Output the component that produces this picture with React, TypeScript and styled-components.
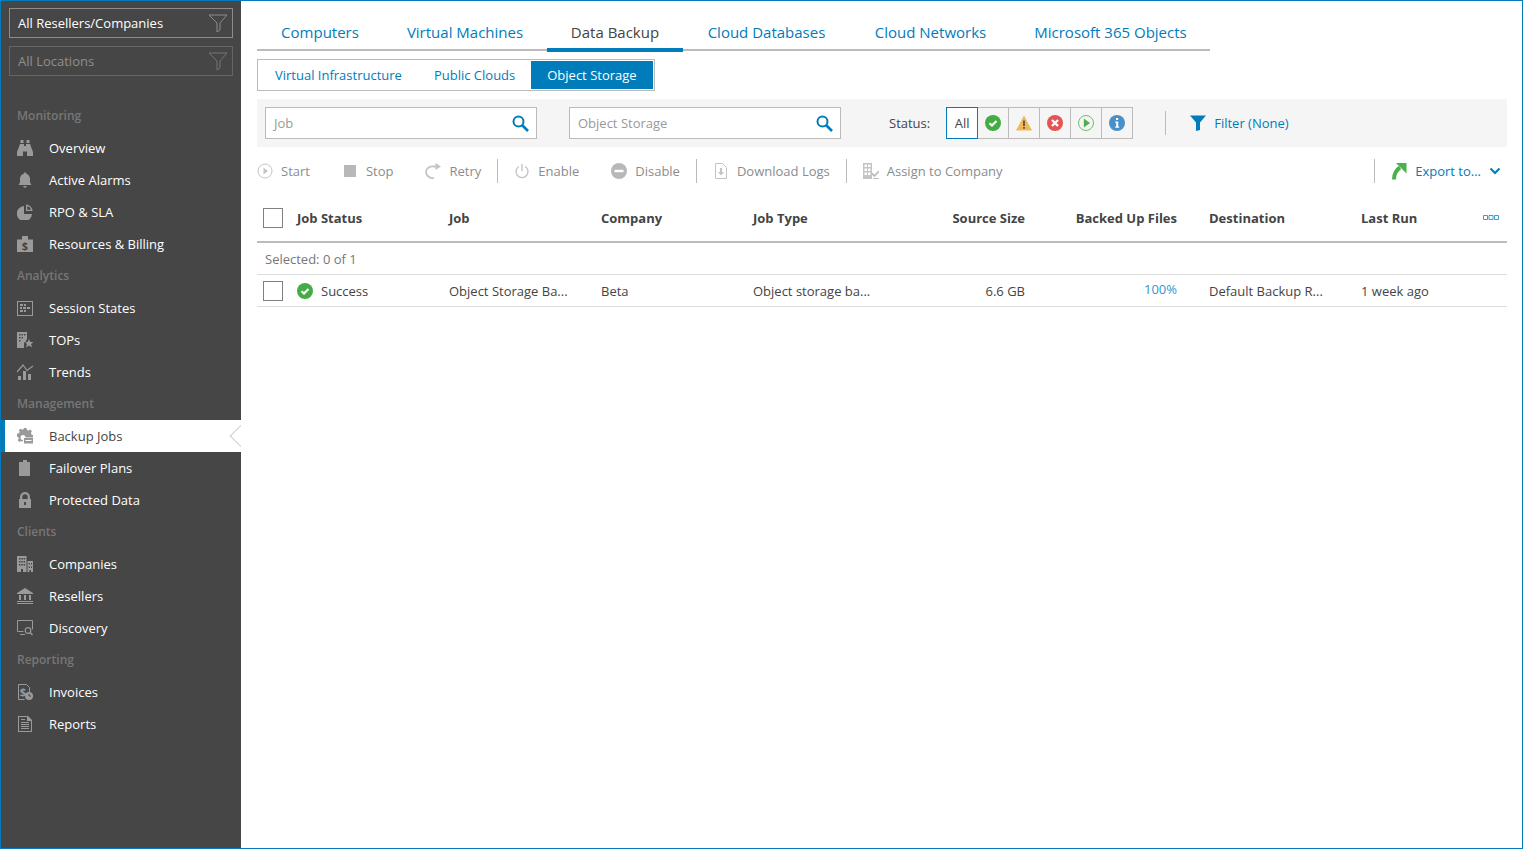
import { ReactNode } from "react";
import styled, { createGlobalStyle } from "styled-components";

const BLUE = "#007cbb";

const GlobalStyle = createGlobalStyle`
    html, body {
        margin: 0;
        padding: 0;
        height: 100%;
        overflow: hidden;
        background: #fff;
    }
    #root {
        height: 100%;
    }
    * {
        box-sizing: border-box;
    }
`;

const Frame = styled.div`
    display: flex;
    height: 100vh;
    border: 1px solid ${BLUE};
    font-family: "Open Sans", "Liberation Sans", sans-serif;
    font-size: 13px;
    color: #444;
`;

const Sidebar = styled.aside`
    flex: 0 0 240px;
    background: #464646;
    padding-top: 7px;
`;

const ScopeGroup = styled.div`
    display: flex;
    flex-direction: column;
    gap: 8px;
    padding: 0 8px;
    margin-bottom: 24px;
`;

const ScopeBox = styled.div<{ $dim?: boolean }>`
    display: flex;
    align-items: center;
    justify-content: space-between;
    height: 30px;
    padding: 0 4px 0 8px;
    border: 1px solid ${(p) => (p.$dim ? "#666" : "#8c8c8c")};
    color: ${(p) => (p.$dim ? "#8f8f8f" : "#fff")};
`;

const SectionTitle = styled.div`
    height: 32px;
    line-height: 31px;
    padding-left: 16px;
    font-size: 12px;
    font-weight: 600;
    color: #777;
`;

const NavItem = styled.div<{ $active?: boolean }>`
    position: relative;
    display: flex;
    align-items: center;
    gap: 16px;
    height: 32px;
    padding-left: ${(p) => (p.$active ? "12px" : "16px")};
    border-left: ${(p) => (p.$active ? `4px solid ${BLUE}` : "none")};
    background: ${(p) => (p.$active ? "#fff" : "transparent")};
    color: ${(p) => (p.$active ? "#444" : "#fff")};
`;

const NotchClip = styled.span`
    position: absolute;
    right: 0;
    top: 0;
    width: 12px;
    height: 32px;
    overflow: hidden;
`;

const Notch = styled.span`
    position: absolute;
    right: -8px;
    top: 8px;
    width: 16px;
    height: 16px;
    background: #fff;
    border-left: 1px solid #ccc;
    border-bottom: 1px solid #ccc;
    transform: rotate(45deg);
`;

const NavIcon = styled.svg`
    flex: 0 0 16px;
    width: 16px;
    height: 16px;
    fill: #9a9a9a;
`;

const Main = styled.main`
    flex: 1;
    min-width: 0;
    padding: 15px 15px 0 16px;
`;

const Tabs = styled.div`
    display: flex;
    width: 953px;
    height: 35px;
    border-bottom: 2px solid #bbb;
`;

const Tab = styled.div<{ $active?: boolean; $width: number }>`
    flex: 0 0 ${(p) => p.$width}px;
    height: 36px;
    padding-top: 5px;
    text-align: center;
    font-size: 15px;
    line-height: 22px;
    color: ${(p) => (p.$active ? "#444" : BLUE)};
    border-bottom: ${(p) => (p.$active ? `4px solid ${BLUE}` : "none")};
`;

const SubTabs = styled.div`
    display: inline-flex;
    height: 32px;
    margin-top: 8px;
    padding: 1px;
    border: 1px solid #bbb;
    vertical-align: top;
`;

const SubTab = styled.div<{ $active?: boolean }>`
    padding: 0 16px;
    line-height: 28px;
    color: ${(p) => (p.$active ? "#fff" : BLUE)};
    background: ${(p) => (p.$active ? BLUE : "transparent")};
`;

const FilterBar = styled.div`
    display: flex;
    align-items: center;
    height: 48px;
    margin-top: 8px;
    padding: 0 8px;
    background: #f5f5f5;
`;

const SearchBox = styled.div`
    display: flex;
    align-items: center;
    justify-content: space-between;
    width: 272px;
    height: 32px;
    padding: 0 7px 0 8px;
    margin-right: 32px;
    background: #fff;
    border: 1px solid #bbb;
    color: #999;
`;

const StatusLabel = styled.span`
    margin-left: 16px;
    margin-right: 16px;
`;

const StatusGroup = styled.div`
    display: flex;
`;

const StatusButton = styled.div<{ $active?: boolean }>`
    position: relative;
    z-index: ${(p) => (p.$active ? 1 : 0)};
    display: flex;
    align-items: center;
    justify-content: center;
    width: 32px;
    height: 32px;
    margin-left: ${(p) => (p.$active ? "0" : "-1px")};
    border: 1px solid ${(p) => (p.$active ? BLUE : "#bbb")};
    background: ${(p) => (p.$active ? "#fff" : "transparent")};
`;

const FilterSep = styled.span`
    width: 1px;
    height: 24px;
    margin: 0 24px 0 32px;
    background: #bbb;
`;

const FilterLink = styled.span`
    display: flex;
    align-items: center;
    gap: 8px;
    color: ${BLUE};
`;

const ActionBar = styled.div`
    display: flex;
    align-items: center;
    height: 32px;
    margin-top: 8px;
`;

const ActionGroup = styled.div`
    display: flex;
    gap: 32px;
`;

const Action = styled.span`
    display: flex;
    align-items: center;
    gap: 8px;
    color: #8c8c8c;
`;

const ActionSep = styled.span<{ $pushed?: boolean }>`
    width: 1px;
    height: 24px;
    margin: ${(p) => (p.$pushed ? "0 16px 0 auto" : "0 16px")};
    background: #bbb;
`;

const ExportLink = styled.span`
    display: flex;
    align-items: center;
    gap: 8px;
    margin-right: 6px;
    color: ${BLUE};
`;

const Row = styled.div<{ $head?: boolean }>`
    display: grid;
    grid-template-columns: 40px 152px 152px 152px 152px 120px 152px 184px 1fr;
    align-items: center;
    height: ${(p) => (p.$head ? "48px" : "32px")};
    margin-top: ${(p) => (p.$head ? "8px" : "0")};
    border-bottom: ${(p) => (p.$head ? "2px solid #bbb" : "1px solid #ddd")};
    font-weight: ${(p) => (p.$head ? 700 : 400)};
`;

const Cell = styled.div<{ $right?: boolean; $pad?: boolean }>`
    display: flex;
    align-items: center;
    justify-content: ${(p) => (p.$right ? "flex-end" : "flex-start")};
    padding-left: ${(p) => (p.$pad ? "32px" : "0")};
    white-space: nowrap;
`;

const SplitCell = styled(Cell)`
    justify-content: space-between;
    padding-right: 8px;
`;

const StatusCell = styled(Cell)`
    gap: 8px;
`;

const Check = styled.span`
    display: block;
    width: 20px;
    height: 20px;
    margin-left: 6px;
    border: 1px solid #808080;
    background: #fff;
`;

const SelectedRow = styled.div`
    height: 32px;
    line-height: 32px;
    padding-left: 8px;
    border-bottom: 1px solid #ddd;
    color: #777;
`;

const Percent = styled.span`
    margin-bottom: 4px;
    color: #2f96cf;
`;

const icons: Record<string, ReactNode> = {
    overview: <path d="M3.500 0h3v3h-3zM9.500 0h3v3h-3zM3 4h4v2h2V4h4l3 8v4h-6v-4.500H6V16H0v-4z" />,
    alarms: <path d="M8 .5c.8 0 1.200.5 1.300 1.200C11.800 2.400 13 4.500 13 7v3.500l1.500 2.500h-13L3 10.500V7c0-2.500 1.200-4.600 3.700-5.300C6.800 1 7.200.5 8 .5zM6.200 14h3.600c-.2 1-.9 1.700-1.800 1.700S6.400 15 6.200 14z" />,
    rpo: (
        <>
            <path d="M7 2v8h8a7.600 7.600 0 1 1-8-8z" />
            <path d="M9 .5a6.600 6.600 0 0 1 6.500 6.500H9zM10.300 1.900V5.700H14A5.200 5.200 0 0 0 10.300 1.900z" fillRule="evenodd" />
        </>
    ),
    billing: (
        <>
            <path d="M5 0h6v3.500h5V16H0V3.500h5z" />
            <text x="8" y="14" textAnchor="middle" fontSize="11" fontWeight="700" fontFamily="Open Sans" fill="#464646">$</text>
        </>
    ),
    session: (
        <path fillRule="evenodd" d="M0 1h16v15H0zM1 2v13h14V2zM3 4h3v2H3zM7 4h2v2H7zM3 7h2v2H3zM6 7h3v2H6zM10 7h3v2h-3zM3 10h3v2H3zM7 10h2v2H7z" />
    ),
    tops: (
        <path d="M0 0h10v7L8.500 9.500l1.200 1H7V16H0zM2 2v1.500h1.500V2zM4.500 2v1.500H6V2zM7 2v1.500h1.500V2zM2 5v1.500h1.500V5zM4.500 5v1.500H6V5zM2 8v1.500h1.500V8zM12 7l1.300 3H16.500l-2.500 2 1 3.500-3-2-3 2 1-3.500-2.500-2h3.200z" fillRule="evenodd" />
    ),
    trends: (
        <>
            <path d="M1 12h3v4H1zM6 7h3v9H6zM11 10h3v6h-3z" />
            <path d="M0 8l6-7 4 5.500L16 2" fill="none" stroke="#9a9a9a" strokeWidth="1.200" />
        </>
    ),
    jobs: (
        <>
            <path d="M7 0h2.500l.5 2 1.500.6 1.700-1 1.700 1.700-1 1.700.6 1.500 1.900.5v2.500H8.500a2.500 2.500 0 1 0-2.500 2.500v1.500L4 12.900l-1.500 1-1.700-1.700 1-1.700-.6-1.500-2-.5V6l2-.5L2.800 4l-1-1.700L3.500.7l1.700 1 1.500-.6z" />
            <path d="M7 10h9v5.500H7z" />
            <path d="M8.500 12h6v1h-6z" fill="#fff" />
        </>
    ),
    plans: <path d="M6 0h4v2h3v14H2V2h4z" />,
    lock: <path fillRule="evenodd" d="M3 7V5a5 5 0 0 1 10 0v2h1v9H2V7zM5.300 7h5.400V5a2.700 2.700 0 0 0-5.400 0zM7 10v3h2v-3z" />,
    companies: (
        <path fillRule="evenodd" d="M0 0h9.500v16H6v-3H4v3H0zM2 2v1.500h1.500V2zM4.300 2v1.500h1.500V2zM6.600 2v1.500h1.500V2zM2 5v1.500h1.500V5zM4.300 5v1.500h1.500V5zM6.600 5v1.500h1.500V5zM2 8v1.500h1.500V8zM4.300 8v1.500h1.500V8zM6.600 8v1.500h1.500V8zM10.500 5H16v11h-2v-2h-1.500v2h-2zM11.700 7v1.500h1.300V7zM14 7v1.500h1V7zM11.700 10.500V12h1.300v-1.500zM14 10.500V12h1v-1.500z" />
    ),
    resellers: <path d="M8 0l8 5v1H0V5zM2 7h2v5H2zM7 7h2v5H7zM12 7h2v5h-2zM0 13h16v1H0zM0 15h16v1H0z" />,
    discovery: (
        <>
            <path d="M.5 11.500V.5h15v9M.5 11.500h6" fill="none" stroke="#9a9a9a" />
            <path d="M3 14h5v1H3z" />
            <circle cx="11" cy="10.500" r="2.800" fill="none" stroke="#9a9a9a" strokeWidth="1.200" />
            <path d="M13 12.500l2.500 2.500" stroke="#9a9a9a" strokeWidth="1.400" />
        </>
    ),
    invoices: (
        <>
            <path d="M1.500 .5h8l3 3V9M1.500 .5v15h6" fill="none" stroke="#9a9a9a" />
            <text x="6" y="11.500" textAnchor="middle" fontSize="11" fontWeight="700" fontFamily="Open Sans" fill="#9a9a9a">$</text>
            <circle cx="12" cy="12" r="4" />
            <path d="M12 9.800V12h2" fill="none" stroke="#464646" />
        </>
    ),
    reports: (
        <path fillRule="evenodd" d="M1 0h10l4 4v12H1zM2 1v14h12V5h-4V1zM4 6h8v1H4zM4 8h8v1H4zM4 10h8v1H4zM4 12h8v1H4zM4 3h4v1H4z" />
    ),
};

const navSections = [
    {
        title: "Monitoring",
        items: [
            ["overview", "Overview"],
            ["alarms", "Active Alarms"],
            ["rpo", "RPO & SLA"],
            ["billing", "Resources & Billing"],
        ],
    },
    {
        title: "Analytics",
        items: [
            ["session", "Session States"],
            ["tops", "TOPs"],
            ["trends", "Trends"],
        ],
    },
    {
        title: "Management",
        items: [
            ["jobs", "Backup Jobs"],
            ["plans", "Failover Plans"],
            ["lock", "Protected Data"],
        ],
    },
    {
        title: "Clients",
        items: [
            ["companies", "Companies"],
            ["resellers", "Resellers"],
            ["discovery", "Discovery"],
        ],
    },
    {
        title: "Reporting",
        items: [
            ["invoices", "Invoices"],
            ["reports", "Reports"],
        ],
    },
];

const tabs = [
    ["Computers", 126],
    ["Virtual Machines", 164],
    ["Data Backup", 136],
    ["Cloud Databases", 167],
    ["Cloud Networks", 161],
    ["Microsoft 365 Objects", 199],
] as const;

const Funnel = ({ color }: { color: string }) => (
    <svg width="20" height="20" viewBox="0 0 20 20">
        <path d="M1 2h18l-7 8v7l-3 2v-9z" fill="none" stroke={color} />
    </svg>
);

const SearchIcon = () => (
    <svg width="17" height="17" viewBox="0 0 17 17">
        <circle cx="6.500" cy="6.500" r="5" fill="none" stroke={BLUE} strokeWidth="2" />
        <path d="M10 10l6 6" stroke={BLUE} strokeWidth="2.600" />
    </svg>
);

const SuccessIcon = () => (
    <svg width="16" height="16" viewBox="0 0 16 16">
        <circle cx="8" cy="8" r="8" fill="#45ab45" />
        <path d="M4.500 8.200l2.500 2.300 4.500-4.500" fill="none" stroke="#fff" strokeWidth="2.200" />
    </svg>
);

const WarningIcon = () => (
    <svg width="16" height="16" viewBox="0 0 16 16">
        <path d="M8 .5L16 15.500H0z" fill="#efb95b" />
        <path d="M7.200 5.500h1.600v5.500H7.200zM7.200 12h1.600v1.800H7.200z" fill="#444" />
    </svg>
);

const ErrorIcon = () => (
    <svg width="16" height="16" viewBox="0 0 16 16">
        <circle cx="8" cy="8" r="8" fill="#e55353" />
        <path d="M5 5l6 6M11 5l-6 6" stroke="#fff" strokeWidth="2.400" />
    </svg>
);

const RunningIcon = () => (
    <svg width="16" height="16" viewBox="0 0 16 16">
        <circle cx="8" cy="8" r="7.500" fill="none" stroke="#6cc16c" />
        <path d="M5.800 3.500L12 8l-6.200 4.500z" fill="#4fb04f" />
    </svg>
);

const InfoIcon = () => (
    <svg width="16" height="16" viewBox="0 0 16 16">
        <circle cx="8" cy="8" r="8" fill="#4a90c8" />
        <path d="M7 3h2.200v2H7zM6.200 6.500h3V11.500h1v1.200H6.200v-1.200h1V7.700h-1z" fill="#fff" />
    </svg>
);

const FilterIcon = () => (
    <svg width="16" height="16" viewBox="0 0 16 16">
        <path d="M0 .5h16L10 7.500V15l-4 1V7.500z" fill={BLUE} />
    </svg>
);

const StartIcon = () => (
    <svg width="16" height="16" viewBox="0 0 16 16">
        <circle cx="8" cy="8" r="7" fill="none" stroke="#c4c4c4" />
        <path d="M6.500 4.500L11 8l-4.500 3.500z" fill="#c4c4c4" />
    </svg>
);

const StopIcon = () => (
    <svg width="16" height="16" viewBox="0 0 16 16">
        <path d="M2 2h12v12H2z" fill="#b8b8b8" />
    </svg>
);

const RetryIcon = () => (
    <svg width="16" height="16" viewBox="0 0 16 16">
        <path d="M9 15.200C4.500 15.500 1 12.500 1 9s3.500-6 8-5.500h2" fill="none" stroke="#c4c4c4" strokeWidth="1.800" />
        <path d="M10.500 0L16 3.500 10.500 7z" fill="#c4c4c4" />
    </svg>
);

const PowerIcon = () => (
    <svg width="16" height="16" viewBox="0 0 16 16">
        <path d="M4.800 3.500a6 6 0 1 0 6.400 0" fill="none" stroke="#c4c4c4" strokeWidth="1.400" />
        <path d="M8 1v7" stroke="#c4c4c4" strokeWidth="1.400" />
    </svg>
);

const DisableIcon = () => (
    <svg width="16" height="16" viewBox="0 0 16 16">
        <circle cx="8" cy="8" r="8" fill="#b8b8b8" />
        <path d="M3.500 6.800h9v2.400h-9z" fill="#fff" />
    </svg>
);

const DownloadIcon = () => (
    <svg width="16" height="16" viewBox="0 0 16 16">
        <path d="M2.500 .5h7l4 4v11h-11z" fill="none" stroke="#c4c4c4" />
        <path d="M7 5h2v4h2l-3 3.500L5 9h2z" fill="#c4c4c4" />
    </svg>
);

const AssignIcon = () => (
    <svg width="16" height="16" viewBox="0 0 16 16">
        <path
            fillRule="evenodd"
            d="M0 0h9v16H0zM1.500 1.500V4H4V1.500zM5 1.500V4h2.500V1.500zM1.500 5.500V8H4V5.500zM5 5.500V8h2.500V5.500zM1.500 9.500V12H4V9.500zM5 9.500V12h2.500V9.500z"
            fill="#c4c4c4"
        />
        <path d="M9 10.500l2.500 2.500L16 8" fill="none" stroke="#bbb" strokeWidth="1.800" />
        <path d="M10 15h6v1h-6z" fill="#c4c4c4" />
    </svg>
);

const ExportIcon = () => (
    <svg width="16" height="18" viewBox="0 0 16 18">
        <path d="M3 17.500C3 12 4.500 8.500 9 5.500" fill="none" stroke="#4cb04c" strokeWidth="4" />
        <path d="M5 1h10.500v10.500z" fill="#4cb04c" />
    </svg>
);

const Chevron = () => (
    <svg width="12" height="12" viewBox="0 0 12 12">
        <path d="M1.500 3.500L6 8l4.500-4.500" fill="none" stroke={BLUE} strokeWidth="2" />
    </svg>
);

const ColumnsIcon = () => (
    <svg width="16" height="6" viewBox="0 0 16 6">
        <path d="M.5 .5h4v4h-4zM6 .5h4v4H6zM11.500 .5h4v4h-4z" fill="none" stroke="#3f9bd0" />
    </svg>
);

function App() {
    return (
        <Frame>
            <GlobalStyle />
            <Sidebar>
                <ScopeGroup>
                    <ScopeBox>
                        All Resellers/Companies
                        <Funnel color="#8c8c8c" />
                    </ScopeBox>
                    <ScopeBox $dim>
                        All Locations
                        <Funnel color="#747474" />
                    </ScopeBox>
                </ScopeGroup>
                {navSections.map((section) => (
                    <div key={section.title}>
                        <SectionTitle>{section.title}</SectionTitle>
                        {section.items.map(([icon, label]) => (
                            <NavItem key={label} $active={label === "Backup Jobs"}>
                                <NavIcon viewBox="0 0 16 16">{icons[icon]}</NavIcon>
                                {label}
                                {label === "Backup Jobs" && (
                                    <NotchClip>
                                        <Notch />
                                    </NotchClip>
                                )}
                            </NavItem>
                        ))}
                    </div>
                ))}
            </Sidebar>
            <Main>
                <Tabs>
                    {tabs.map(([label, width]) => (
                        <Tab key={label} $width={width} $active={label === "Data Backup"}>
                            {label}
                        </Tab>
                    ))}
                </Tabs>
                <SubTabs>
                    <SubTab>Virtual Infrastructure</SubTab>
                    <SubTab>Public Clouds</SubTab>
                    <SubTab $active>Object Storage</SubTab>
                </SubTabs>
                <FilterBar>
                    <SearchBox>
                        Job
                        <SearchIcon />
                    </SearchBox>
                    <SearchBox>
                        Object Storage
                        <SearchIcon />
                    </SearchBox>
                    <StatusLabel>Status:</StatusLabel>
                    <StatusGroup>
                        <StatusButton $active>All</StatusButton>
                        <StatusButton><SuccessIcon /></StatusButton>
                        <StatusButton><WarningIcon /></StatusButton>
                        <StatusButton><ErrorIcon /></StatusButton>
                        <StatusButton><RunningIcon /></StatusButton>
                        <StatusButton><InfoIcon /></StatusButton>
                    </StatusGroup>
                    <FilterSep />
                    <FilterLink>
                        <FilterIcon />
                        Filter (None)
                    </FilterLink>
                </FilterBar>
                <ActionBar>
                    <ActionGroup>
                        <Action><StartIcon />Start</Action>
                        <Action><StopIcon />Stop</Action>
                        <Action><RetryIcon />Retry</Action>
                    </ActionGroup>
                    <ActionSep />
                    <ActionGroup>
                        <Action><PowerIcon />Enable</Action>
                        <Action><DisableIcon />Disable</Action>
                    </ActionGroup>
                    <ActionSep />
                    <Action><DownloadIcon />Download Logs</Action>
                    <ActionSep />
                    <Action><AssignIcon />Assign to Company</Action>
                    <ActionSep $pushed />
                    <ExportLink>
                        <ExportIcon />
                        Export to...
                        <Chevron />
                    </ExportLink>
                </ActionBar>
                <Row $head>
                    <Cell><Check /></Cell>
                    <Cell>Job Status</Cell>
                    <Cell>Job</Cell>
                    <Cell>Company</Cell>
                    <Cell>Job Type</Cell>
                    <Cell $right>Source Size</Cell>
                    <Cell $right>Backed Up Files</Cell>
                    <Cell $pad>Destination</Cell>
                    <SplitCell>
                        Last Run
                        <ColumnsIcon />
                    </SplitCell>
                </Row>
                <SelectedRow>Selected: 0 of 1</SelectedRow>
                <Row>
                    <Cell><Check /></Cell>
                    <StatusCell><SuccessIcon />Success</StatusCell>
                    <Cell>Object Storage Ba...</Cell>
                    <Cell>Beta</Cell>
                    <Cell>Object storage ba...</Cell>
                    <Cell $right>6.6 GB</Cell>
                    <Cell $right><Percent>100%</Percent></Cell>
                    <Cell $pad>Default Backup R...</Cell>
                    <Cell>1 week ago</Cell>
                </Row>
            </Main>
        </Frame>
    );
}

export default App;
